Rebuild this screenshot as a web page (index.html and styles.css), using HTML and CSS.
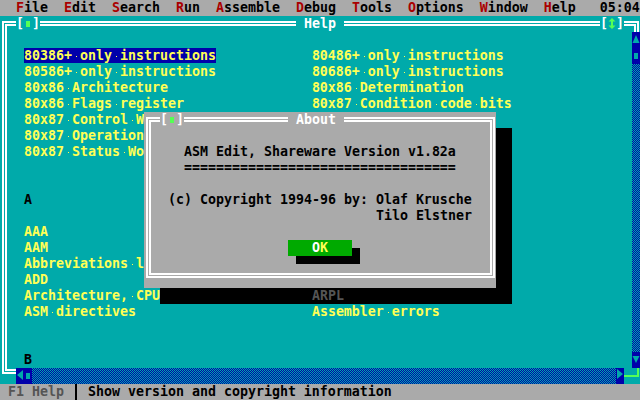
FILE: index.html
```html
<!DOCTYPE html>
<html>
<head>
<meta charset="utf-8">
<title>ASM Edit - About</title>
<link rel="stylesheet" href="styles.css">
</head>
<body>
<div class="screen">
  <div class="menubar">  <span class="hk">F</span>ile  <span class="hk">E</span>dit  <span class="hk">S</span>earch  <span class="hk">R</span>un  <span class="hk">A</span>ssemble  <span class="hk">D</span>ebug  <span class="hk">T</span>ools  <span class="hk">O</span>ptions  <span class="hk">W</span>indow  <span class="hk">H</span>elp   05:04</div>

  <div class="win">
    <div class="frame"></div>
    <div class="tb tb-close">[<i class="sq"></i>]</div>
    <div class="tb tb-title"> Help </div>
    <div class="tb tb-zoom">[<svg class="ico" width="8" height="16" viewBox="0 0 8 16"><path d="M4 2 L7.5 5.5 H5 V9.5 H7.5 L4 13 L0.5 9.5 H3 V5.5 H0.5 Z" fill="#55ff55"/></svg>]</div>

    <div class="body">
      <div class="ln"></div>
      <div class="ln">  <span class="lk sel">80386+<i></i>only<i></i>instructions</span>            <span class="lk">80486+<i></i>only<i></i>instructions</span></div>
      <div class="ln">  <span class="lk">80586+<i></i>only<i></i>instructions</span>            <span class="lk">80686+<i></i>only<i></i>instructions</span></div>
      <div class="ln">  <span class="lk">80x86<i></i>Architecture</span>                  <span class="lk">80x86<i></i>Determination</span></div>
      <div class="ln">  <span class="lk">80x86<i></i>Flags<i></i>register</span>                <span class="lk">80x87<i></i>Condition<i></i>code<i></i>bits</span></div>
      <div class="ln">  <span class="lk">80x87<i></i>Control<i></i>Word</span></div>
      <div class="ln">  <span class="lk">80x87<i></i>Operation</span></div>
      <div class="ln">  <span class="lk">80x87<i></i>Status<i></i>Word</span></div>
      <div class="ln"></div>
      <div class="ln"></div>
      <div class="ln">  <span class="hd">A</span></div>
      <div class="ln"></div>
      <div class="ln">  <span class="lk">AAA</span></div>
      <div class="ln">  <span class="lk">AAM</span></div>
      <div class="ln">  <span class="lk">Abbreviations<i></i>list</span></div>
      <div class="ln">  <span class="lk">ADD</span></div>
      <div class="ln">  <span class="lk">Architecture,<i></i>CPU</span></div>
      <div class="ln">  <span class="lk">ASM<i></i>directives</span>                      <span class="lk">Assembler<i></i>errors</span></div>
      <div class="ln"></div>
      <div class="ln"></div>
      <div class="ln">  <span class="hd">B</span></div>
    </div>

    <div class="vscroll">
      <div class="cell arrow"><svg width="8" height="16" viewBox="0 0 8 16"><path d="M4 3 L7.5 11 H0.5 Z" fill="#00aaaa"/></svg></div>
      <div class="cell thumb"></div>
      <div class="track"></div>
      <div class="cell arrow"><svg width="8" height="16" viewBox="0 0 8 16"><path d="M0.5 4 H7.5 L4 11 Z" fill="#00aaaa"/></svg></div>
    </div>

    <div class="hscroll">
      <div class="cell arrow"><svg width="8" height="16" viewBox="0 0 8 16"><path d="M7 2 V12 L1 7 Z" fill="#00aaaa"/></svg></div>
      <div class="cell thumb"></div>
      <div class="track"></div>
      <div class="cell arrow"><svg width="8" height="16" viewBox="0 0 8 16"><path d="M1 1 V11 L7 6 Z" fill="#00aaaa"/></svg></div>
    </div>

    <div class="grip"></div>

    <div class="shadow">ARPL</div>

    <div class="dlg">
      <div class="dframe"></div>
      <div class="dt dclose">[<i class="sq"></i>]</div>
      <div class="dt dtitle"> About </div>
      <div class="t1">ASM Edit, Shareware Version v1.82a</div>
      <div class="t2">==================================</div>
      <div class="t3">(c) Copyright 1994-96 by: Olaf Krusche</div>
      <div class="t4">Tilo Elstner</div>
      <div class="bshadow"></div>
      <div class="btn">   O<span class="bk">K</span>   </div>
    </div>
  </div>

  <div class="status"> <span class="dim">F1 Help</span> <i class="sep"></i> Show version and copyright information</div>
</div>
</body>
</html>
```

FILE: styles.css
```css
* { box-sizing: border-box; margin: 0; padding: 0; }

html, body {
  width: 640px;
  height: 400px;
  overflow: hidden;
  background: #000;
}

.screen {
  display: grid;
  grid-template-columns: repeat(80, 8px);
  grid-template-rows: repeat(25, 16px);
  font-family: "DejaVu Sans Mono", monospace;
  font-weight: bold;
  font-size: 13.29px;
  line-height: 16px;
  color: #000;
}

.screen i { font-style: normal; }

.menubar, .status, .ln, .tb, .dt, .shadow,
.t1, .t2, .t3, .t4, .btn {
  white-space: pre;
}

/* menu bar */
.menubar {
  grid-area: 1 / 1 / 2 / 81;
  background: #aaaaaa;
}
.hk { color: #aa0000; }

/* help window */
.win {
  grid-area: 2 / 1 / 25 / 81;
  display: grid;
  grid-template-columns: repeat(80, 8px);
  grid-template-rows: repeat(23, 16px);
  background: #00aaaa;
}

.frame {
  grid-area: 1 / 1 / 24 / 81;
  margin: 5px 1px 10px 2px;
  border: 5px double #ffffff;
}

.tb {
  background: #00aaaa;
  color: #ffffff;
}
.tb-close { grid-area: 1 / 3 / 2 / 6; }
.tb-title { grid-area: 1 / 38 / 2 / 44; }
.tb-zoom  { grid-area: 1 / 76 / 2 / 79; }

.sq {
  display: inline-block;
  width: 8px;
  height: 16px;
  vertical-align: top;
  background: linear-gradient(#55ff55, #55ff55) 2px 5px / 4px 6px no-repeat;
}
.ico {
  display: inline-block;
  vertical-align: top;
}

.body {
  grid-area: 2 / 2 / 23 / 79;
}
.ln { height: 16px; }
.lk { color: #ffff55; }
.lk i {
  display: inline-block;
  width: 8px;
  height: 16px;
  vertical-align: top;
  background: linear-gradient(#ffff55, #ffff55) 4px 8px / 1px 1px no-repeat;
}
.sel { background: #0000aa; }
.hd { color: #000; }

/* scroll bars */
.vscroll {
  grid-area: 2 / 80 / 23 / 81;
  display: flex;
  flex-direction: column;
}
.hscroll {
  grid-area: 23 / 3 / 24 / 79;
  display: flex;
}
.cell {
  flex: none;
  width: 8px;
  height: 16px;
  background: #0000aa;
}
.cell svg { display: block; }
.thumb {
  background: #0000aa linear-gradient(#00aaaa, #00aaaa) 2px 5px / 4px 6px no-repeat;
}
.track {
  flex: 1;
  background: repeating-conic-gradient(#0000aa 0% 25%, #00aaaa 0% 50%) 0 0 / 2px 2px;
}

.grip {
  grid-area: 23 / 79 / 24 / 81;
  background: #00aaaa;
}
.grip::before {
  content: "";
  display: block;
  width: 13px;
  height: 7px;
  border-right: 2px solid #55ff55;
  border-bottom: 2px solid #55ff55;
}

/* dialog shadow */
.shadow {
  grid-area: 8 / 21 / 19 / 65;
  background: #000;
  color: #555555;
  display: flex;
  align-items: flex-end;
  padding-left: 152px;
}

/* about dialog */
.dlg {
  grid-area: 7 / 19 / 18 / 63;
  display: grid;
  grid-template-columns: repeat(44, 8px);
  grid-template-rows: repeat(11, 16px);
  background: #aaaaaa;
}
.dframe {
  grid-area: 1 / 1 / 12 / 45;
  margin: 5px 1px 10px 2px;
  border: 5px double #ffffff;
}
.dt {
  background: #aaaaaa;
  color: #ffffff;
}
.dclose { grid-area: 1 / 3 / 2 / 6; }
.dtitle { grid-area: 1 / 19 / 2 / 26; }

.t1 { grid-area: 3 / 6; }
.t2 { grid-area: 4 / 6; }
.t3 { grid-area: 6 / 4; }
.t4 { grid-area: 7 / 30; }

.bshadow {
  grid-area: 9 / 20 / 11 / 28;
  margin-top: 8px;
  height: 16px;
  background: #000;
}
.btn {
  grid-area: 9 / 19 / 10 / 27;
  background: #00aa00;
  color: #ffffff;
}
.bk { color: #ffff55; }

/* status line */
.status {
  grid-area: 25 / 1 / 26 / 81;
  background: #aaaaaa;
}
.dim { color: #555555; }
.sep {
  display: inline-block;
  width: 8px;
  height: 16px;
  vertical-align: top;
  background: linear-gradient(#000, #000) 3px 0 / 2px 16px no-repeat;
}
```
